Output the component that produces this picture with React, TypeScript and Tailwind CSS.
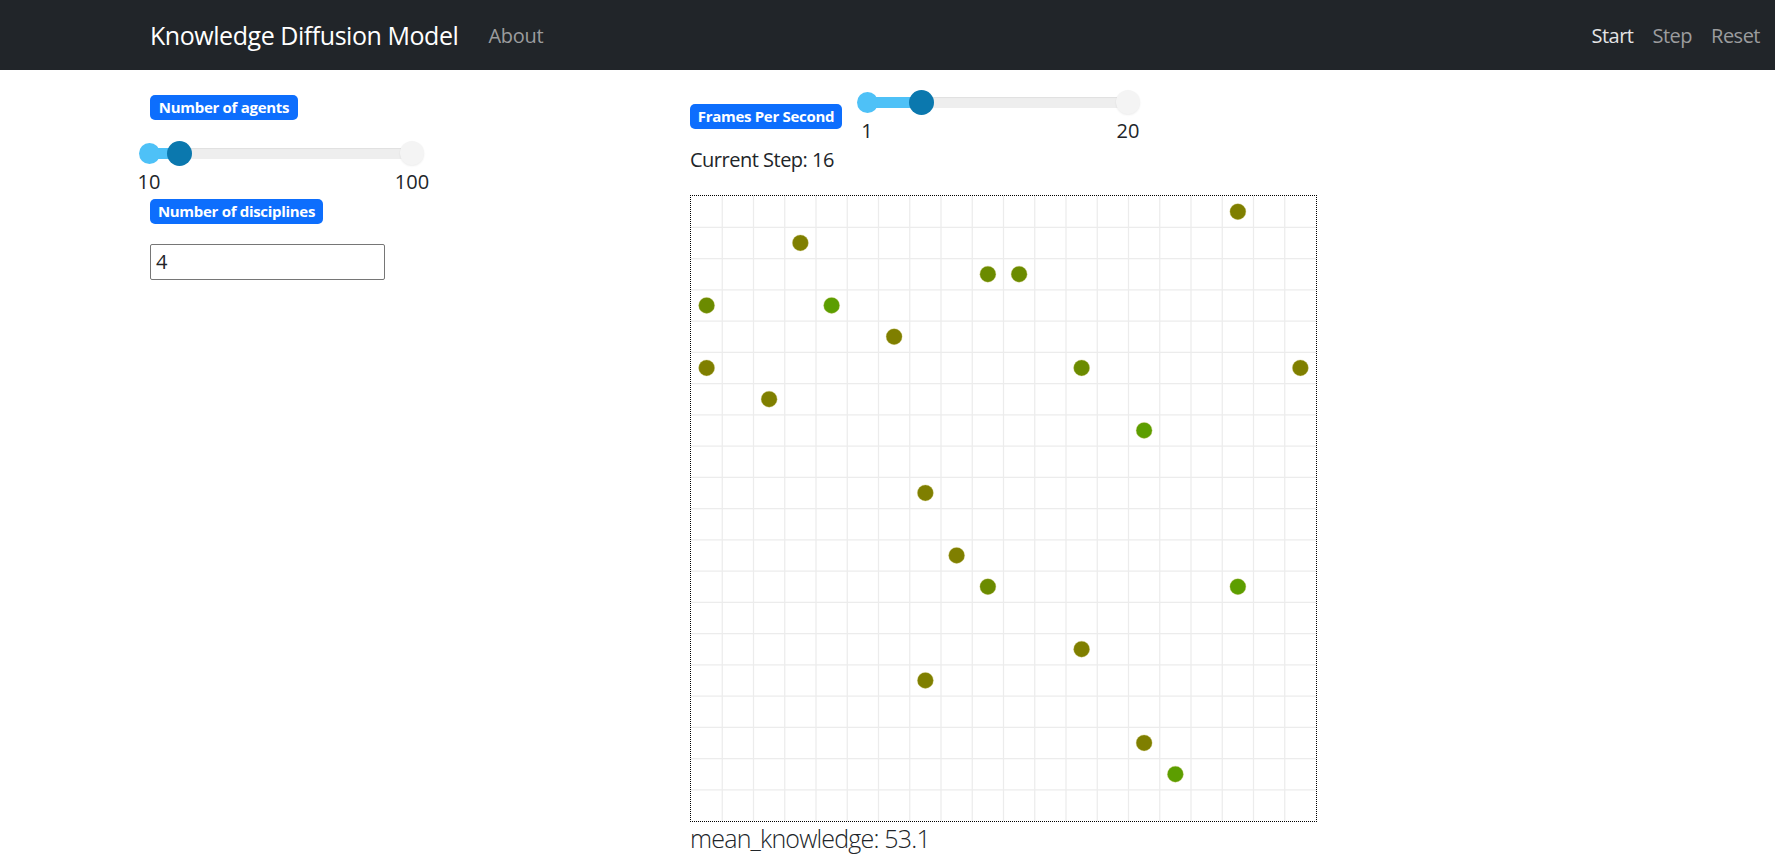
import React from 'react';

const FONT = '"Open Sans", "Liberation Sans", sans-serif';

const OLIVE = '#7f7f00';
const MID = '#6b8b00';
const GREEN = '#5c9e00';

// agents on the 20x20 grid: [col, row, colour]
const agents: [number, number, string][] = [
  [17, 0, OLIVE],
  [3, 1, OLIVE],
  [9, 2, MID],
  [10, 2, MID],
  [0, 3, MID],
  [4, 3, GREEN],
  [6, 4, OLIVE],
  [0, 5, OLIVE],
  [12, 5, MID],
  [19, 5, OLIVE],
  [2, 6, OLIVE],
  [14, 7, GREEN],
  [7, 9, OLIVE],
  [8, 11, OLIVE],
  [9, 12, MID],
  [17, 12, GREEN],
  [12, 14, OLIVE],
  [7, 15, OLIVE],
  [14, 17, OLIVE],
  [15, 18, GREEN],
];

const Badge = ({ children, w }: { children: React.ReactNode; w: string }) => (
  <span className={`inline-block ${w} text-center bg-[#0d6efd] text-white font-bold text-[15px] leading-[15px] tracking-[-0.3px] py-[5px] rounded-[5px] whitespace-nowrap`}>
    {children}
  </span>
);

interface SliderProps {
  track: number;
  pos: number;
  min: string;
  max: string;
}

const Slider: React.FC<SliderProps> = ({ track, pos, min, max }) => (
  <div style={{ width: track + 26 }}>
    <div className="relative h-[26px]">
      <div className="absolute left-[13px] right-[13px] top-[7.5px] h-[11px] rounded-full bg-[#eeeeee] shadow-[inset_0_1px_1px_rgba(0,0,0,0.06)]" />
      <div className="absolute left-[13px] top-[7.5px] h-[11px] bg-[#4ec1f7]" style={{ width: pos }} />
      <div className="absolute left-[2.5px] top-[2.5px] w-[21px] h-[21px] rounded-full bg-[#4ec1f7]" />
      <div className="absolute right-[1px] top-[1px] w-[24px] h-[24px] rounded-full bg-[#f4f4f4] shadow-[0_1px_2px_rgba(0,0,0,0.08)]" />
      <div
        className="absolute top-[0.5px] w-[25px] h-[25px] rounded-full bg-[#0b78ae]"
        style={{ left: 13 + pos - 12.5 }}
      />
    </div>
    <div className="-mx-[7px] mt-[3px] flex justify-between text-[20px] leading-[25px] text-[#212529]">
      <span className="w-[40px] text-center">{min}</span>
      <span className="w-[40px] text-center">{max}</span>
    </div>
  </div>
);

const Grid = () => {
  const cell = 31.25;
  const lines = Array.from({ length: 19 }, (_, i) => (i + 1) * cell);
  return (
    <svg width={625} height={625} className="block">
      {lines.map((p) => (
        <g key={p}>
          <line x1={p} y1={0} x2={p} y2={625} stroke="#ececec" strokeWidth={1.25} />
          <line x1={0} y1={p} x2={625} y2={p} stroke="#ececec" strokeWidth={1.25} />
        </g>
      ))}
      {agents.map(([c, r, col], i) => (
        <circle key={i} cx={(c + 0.5) * cell} cy={(r + 0.5) * cell} r={8} fill={col} stroke="#c9c46a" strokeOpacity={0.35} strokeWidth={1} />
      ))}
    </svg>
  );
};

export default function App() {
  return (
    <div className="min-h-screen bg-white text-[#212529]" style={{ fontFamily: FONT }}>
      <nav className="h-[70px] bg-[#212529] flex items-center pl-[150px] pr-[15px]">
        <span className="mt-[2px] text-[25px] tracking-[-0.45px] text-white">Knowledge Diffusion Model</span>
        <span className="ml-[30px] mt-[2px] text-[20px] tracking-[-0.3px] text-[#9b9c9e]">About</span>
        <div className="ml-auto mt-[2px] flex gap-[19px] text-[20px] tracking-[-0.5px]">
          <span className="text-[#e4e4e5]">Start</span>
          <span className="text-[#9b9c9e]">Step</span>
          <span className="text-[#9b9c9e]">Reset</span>
        </div>
      </nav>

      <div className="flex pl-[150px]">
        <div className="w-[540px] pt-[25px]">
          <Badge w="w-[148px]">Number of agents</Badge>
          <div className="mt-[20px] -ml-[14px]">
            <Slider track={263} pos={30} min="10" max="100" />
          </div>
          <div className="mt-[5px]">
            <Badge w="w-[173px]">Number of disciplines</Badge>
          </div>
          <div className="mt-[20px] w-[235px] h-[36px] border border-[#767676] rounded-[2px] px-[5px] flex items-center text-[20px]">
            4
          </div>
        </div>

        <div className="pt-[19px]">
          <div className="flex items-start gap-[12px]">
            <div className="mt-[15px]">
              <Badge w="w-[152px]">Frames Per Second</Badge>
            </div>
            <Slider track={261} pos={54} min="1" max="20" />
          </div>
          <p className="mt-[2px] text-[20px] leading-[30px] tracking-[-0.5px]">Current Step: 16</p>
          <div className="mt-[20px] w-[627px] h-[627px] border border-dotted border-black">
            <Grid />
          </div>
          <p className="-mt-[2px] text-[25px] leading-[37px] font-light tracking-[-0.8px]">mean_knowledge: 53.1</p>
        </div>
      </div>
    </div>
  );
}
